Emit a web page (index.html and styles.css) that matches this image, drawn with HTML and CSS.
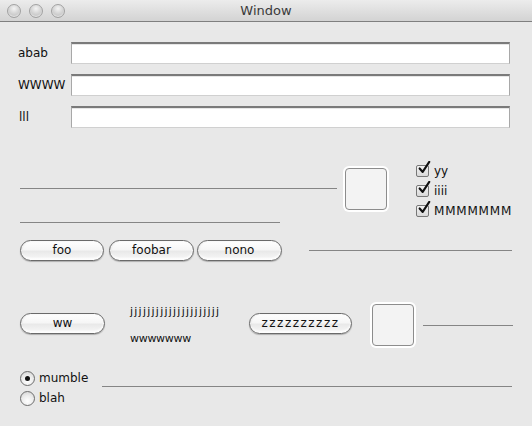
FILE: index.html
```html
<!DOCTYPE html>
<html>
<head>
<meta charset="utf-8">
<link rel="stylesheet" href="styles.css">
</head>
<body>
<div class="window">
  <div class="titlebar">
    <div class="lights">
      <span class="light"></span><span class="light"></span><span class="light"></span>
    </div>
    <div class="title">Window</div>
  </div>
  <div class="content">
    <div class="form">
      <label class="lbl">abab</label><div class="field"></div>
      <label class="lbl">WWWW</label><div class="field"></div>
      <label class="lbl lbl-l">lll</label><div class="field"></div>
    </div>

    <div class="mid">
      <div class="mid-left">
        <div class="rule rule-a"></div>
        <div class="rule rule-b"></div>
      </div>
      <div class="well well-top"><div class="well-in"></div></div>
      <div class="checks">
        <div class="check"><span class="cbox"><svg viewBox="0 0 16 16" class="tick"><path d="M3 8.5 L6.5 12.5 L14 1" fill="none" stroke="#111" stroke-width="2.4" stroke-linecap="round" stroke-linejoin="round"/></svg></span><span>yy</span></div>
        <div class="check"><span class="cbox"><svg viewBox="0 0 16 16" class="tick"><path d="M3 8.5 L6.5 12.5 L14 1" fill="none" stroke="#111" stroke-width="2.4" stroke-linecap="round" stroke-linejoin="round"/></svg></span><span>iiii</span></div>
        <div class="check"><span class="cbox"><svg viewBox="0 0 16 16" class="tick"><path d="M3 8.5 L6.5 12.5 L14 1" fill="none" stroke="#111" stroke-width="2.4" stroke-linecap="round" stroke-linejoin="round"/></svg></span><span class="mm">MMMMMMM</span></div>
      </div>
    </div>

    <div class="btnrow">
      <button class="btn b-foo">foo</button>
      <button class="btn b-foobar">foobar</button>
      <button class="btn b-nono">nono</button>
      <div class="rule rule-c"></div>
    </div>

    <div class="lowrow">
      <button class="btn b-ww">ww</button>
      <div class="texts">
        <div class="t1">jjjjjjjjjjjjjjjjjjjjj</div>
        <div class="t2">wwwwwww</div>
      </div>
      <button class="btn b-zz">zzzzzzzzzz</button>
      <div class="well well-low"><div class="well-in"></div></div>
      <div class="rule rule-d"></div>
    </div>

    <div class="radiorow">
      <div class="radios">
        <div class="radio"><span class="rdot on"></span><span>mumble</span></div>
        <div class="radio"><span class="rdot"></span><span>blah</span></div>
      </div>
      <div class="rule rule-e"></div>
    </div>
  </div>
</div>
</body>
</html>
```

FILE: styles.css
```css
* { box-sizing: border-box; }
html, body { margin: 0; padding: 0; }
body {
  width: 532px;
  height: 426px;
  overflow: hidden;
  font-family: "DejaVu Sans", "Liberation Sans", sans-serif;
  font-size: 12px;
  color: #111;
  background: #e8e8e8;
}
.window { width: 532px; height: 426px; background: #e8e8e8; }
.titlebar {
  height: 22px;
  position: relative;
  background: linear-gradient(#ececec, #d3d3d3);
  border-bottom: 1px solid #7f7f7f;
  display: flex;
  align-items: center;
}
.lights { display: flex; gap: 8px; padding-left: 7px; }
.light {
  width: 14px; height: 14px; border-radius: 50%;
  background: radial-gradient(circle at 50% 30%, #f4f4f4 0, #d6d6d6 45%, #b4b4b4 100%);
  border: 1px solid #a2a2a2;
  box-shadow: inset 0 -1px 1px rgba(255,255,255,0.6);
}
.title {
  position: absolute; left: 0; right: 0; top: 3px;
  text-align: center; font-size: 13px; color: #3a3a3a;
}
.content { padding: 20px 0 0 0; }
.form {
  display: grid;
  grid-template-columns: 53px 439px;
  row-gap: 10px;
  padding-left: 18px;
  align-items: center;
}
.lbl { font-size: 12px; }
.lbl-l { padding-left: 1px; }
.field {
  height: 22px;
  background: #fff;
  border-top: 2px solid #7a7a7a;
  border-left: 1px solid #a8a8a8;
  border-right: 1px solid #a8a8a8;
  border-bottom: 1px solid #d0d0d0;
  box-shadow: inset 0 1px 0 #e6e6e6;
}
.rule { height: 1px; background: #858585; flex-shrink: 0; }
.mid { display: flex; align-items: flex-start; padding-left: 20px; margin-top: 32px; }
.mid-left { width: 317px; padding-top: 28px; }
.rule-a { width: 317px; }
.rule-b { width: 260px; margin-top: 33px; }
.well {
  width: 46px; height: 46px;
  border-radius: 6px;
  background: #fff;
  padding: 2px;
  flex-shrink: 0;
}
.well-in {
  width: 100%; height: 100%;
  border: 1px solid #8c8c8c;
  border-radius: 4px;
  background: #f3f3f3;
}
.well-top { margin-left: 6px; margin-top: 6px; }
.checks { margin-left: 26px; margin-top: 1px; display: flex; flex-direction: column; }
.check { display: flex; align-items: center; height: 20px; gap: 5px; font-size: 12px; }
.mm { letter-spacing: 0.8px; }
.cbox {
  width: 13px; height: 12px; position: relative;
  border: 1px solid #777;
  border-radius: 2px;
  background: linear-gradient(#f4f4f4, #d8d8d8);
  margin-left: 1px;
}
.tick { position: absolute; width: 14px; height: 14px; left: 0; top: -5px; }
.btnrow { display: flex; align-items: center; padding-left: 20px; margin-top: 17px; }
.btn {
  font-family: "DejaVu Sans", "Liberation Sans", sans-serif;
  font-size: 12px; color: #111;
  height: 21px; padding: 0;
  flex-shrink: 0;
  border: 1px solid #6a6a6a;
  border-radius: 11px;
  background: linear-gradient(#ffffff 0%, #f6f6f6 45%, #e9e9e9 55%, #f8f8f8 100%);
  box-shadow: 0 1px 1px rgba(0,0,0,0.25), inset 0 -2px 2px rgba(255,255,255,0.9), inset 1px 0 2px rgba(0,0,0,0.08);
  line-height: 19px;
}
.b-foo { width: 84px; }
.b-foobar { width: 85px; margin-left: 5px; }
.b-nono { width: 85px; margin-left: 3px; }
.rule-c { width: 203px; margin-left: 27px; }
.lowrow { display: flex; align-items: center; padding-left: 20px; margin-top: 42px; height: 44px; }
.b-ww { width: 85px; margin-top: -3px; }
.texts { align-self: flex-start; margin-left: 25px; width: 119px; flex-shrink: 0; font-size: 11px; line-height: 13px; }
.t1 { height: 16px; margin-top: 2px; letter-spacing: 1.25px; white-space: nowrap; }
.t2 { margin-top: 11px; letter-spacing: -0.3px; white-space: nowrap; }
.b-zz { width: 103px; margin-top: -3px; letter-spacing: 1.5px; }
.well-low { margin-left: 18px; }
.rule-d { width: 90px; margin-left: 7px; }
.radiorow { display: flex; align-items: flex-start; padding-left: 20px; margin-top: 21px; }
.radios { width: 82px; display: flex; flex-direction: column; }
.radio { display: flex; align-items: center; height: 20px; gap: 4px; font-size: 12px; }
.rdot {
  width: 15px; height: 15px; border-radius: 50%;
  border: 1px solid #6d6d6d;
  background: radial-gradient(circle at 50% 70%, #ffffff 0, #ececec 50%, #cfcfcf 100%);
  position: relative;
}
.rdot.on::after {
  content: ""; position: absolute; left: 4px; top: 4px;
  width: 5px; height: 5px; border-radius: 50%; background: #111;
}
.rule-e { width: 410px; margin-top: 18px; }
```
